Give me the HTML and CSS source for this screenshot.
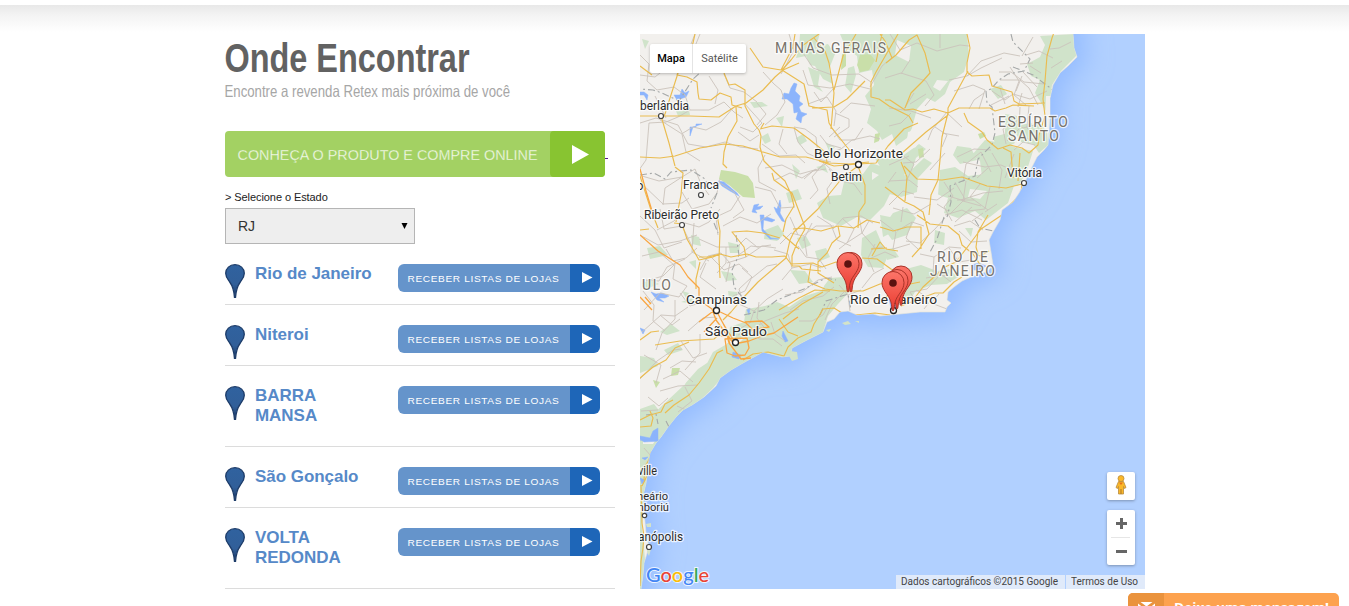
FILE: index.html
```html
<!DOCTYPE html>
<html lang="pt-BR">
<head>
<meta charset="utf-8">
<title>Onde Encontrar</title>
<link rel="stylesheet" href="styles.css">
</head>
<body>
<svg class="defs" width="0" height="0">
  <defs>
    <linearGradient id="pinBlue" x1="0" y1="0" x2="0" y2="1"><stop offset="0" stop-color="#30629f"/><stop offset=".6" stop-color="#315f99"/><stop offset="1" stop-color="#183663"/></linearGradient>
    <linearGradient id="pinRed" x1="0" y1="0" x2="0" y2="1"><stop offset="0" stop-color="#fc7569"/><stop offset="1" stop-color="#e93b30"/></linearGradient>
    <symbol id="pin" viewBox="0 0 20 34"><path d="M10 .7C4.700.7.7 4.300.7 9.300c0 4 2 6 4 8.700C8 22.500 9 26 9.500 33.500h1C11 26 12 22.500 15.300 18c2-2.700 4-4.700 4-8.700C19.300 4.300 15.300.7 10 .7z" fill="url(#pinBlue)" stroke="#1d3c69" stroke-width="1.300"/></symbol>
    <symbol id="receber" viewBox="0 0 202 28">
      <path d="M6 0H172V28H6a6 6 0 0 1-6-6V6a6 6 0 0 1 6-6z" fill="#6594cb"/><path d="M172 0h24a6 6 0 0 1 6 6v16a6 6 0 0 1-6 6h-24z" fill="#1e66b8"/><path d="M184 8l10.500 5.500L184 19z" fill="#fff"/>
    </symbol>
    <g id="marker"><path d="M0 0C-.7-.2-1-1-1.200-4-2-12-5-15-8-19.500-9.500-22-11-24.500-11-28.500A11 11 0 0 1 11-28.500C11-24.500 9.500-22 8-19.500 5-15 2-12 1.200-4 1-1 .7-.2 0 0z" fill="url(#pinRed)" stroke="#a83228" stroke-width="1"/><circle cy="-28" r="3.800" fill="#5c1210"/></g>
  </defs>
</svg>
<div class="topbar"></div>
<main class="page">
  <section class="stores">
    <h1 class="title"><svg width="390" height="44"><text x="-.5" y="37.500" textLength="245" lengthAdjust="spacingAndGlyphs">Onde Encontrar</text></svg></h1>
    <p class="subtitle"><svg width="390" height="26"><text x="-.5" y="19" textLength="285.500" lengthAdjust="spacingAndGlyphs">Encontre a revenda Retex mais próxima de você</text></svg></p>
    <a class="buy"><svg width="384" height="46">
      <rect width="380" height="46" rx="4" fill="#a3d163"/><rect x="325" width="55" height="46" rx="4" fill="#88c431"/><path d="M347 14l17 9.500-17 9.500z" fill="#fff"/><path d="M380 27.500h3" stroke="#551a8b"/>
      <text x="12.500" y="29" textLength="300" lengthAdjust="spacingAndGlyphs">CONHEÇA O PRODUTO E COMPRE ONLINE</text></svg></a>
    <label class="state-label">&gt; Selecione o Estado</label>
    <div class="select"><span>RJ</span><svg width="7" height="7"><path d="M.5 0h6L3.500 6z"/></svg></div>
    <ul class="list">
      <li><svg class="pin"><use href="#pin"/></svg><strong>Rio de Janeiro</strong><svg class="receber"><use href="#receber"/><text x="9.500" y="18" textLength="152" lengthAdjust="spacingAndGlyphs">RECEBER LISTAS DE LOJAS</text></svg></li>
      <li><svg class="pin"><use href="#pin"/></svg><strong>Niteroi</strong><svg class="receber"><use href="#receber"/><text x="9.500" y="18" textLength="152" lengthAdjust="spacingAndGlyphs">RECEBER LISTAS DE LOJAS</text></svg></li>
      <li><svg class="pin"><use href="#pin"/></svg><strong>BARRA MANSA</strong><svg class="receber"><use href="#receber"/><text x="9.500" y="18" textLength="152" lengthAdjust="spacingAndGlyphs">RECEBER LISTAS DE LOJAS</text></svg></li>
      <li><svg class="pin"><use href="#pin"/></svg><strong>São Gonçalo</strong><svg class="receber"><use href="#receber"/><text x="9.500" y="18" textLength="152" lengthAdjust="spacingAndGlyphs">RECEBER LISTAS DE LOJAS</text></svg></li>
      <li><svg class="pin"><use href="#pin"/></svg><strong>VOLTA REDONDA</strong><svg class="receber"><use href="#receber"/><text x="9.500" y="18" textLength="152" lengthAdjust="spacingAndGlyphs">RECEBER LISTAS DE LOJAS</text></svg></li>
    </ul>
  </section>
  <section class="map">
    <svg class="canvas" width="505" height="555" viewBox="640 34 505 555">
      <defs>
        <filter id="soft" x="-30%" y="-30%" width="160%" height="160%"><feGaussianBlur stdDeviation="13"/></filter>
        <path id="coast" d="M600 0H1073V34L1074 48 1077 57 1068 66 1060 73 1053 85 1050 98 1050 115 1049 130 1048 145 1044 150 1037 157 1031 169 1025 182 1019 193 1013 202 1002 210 1000 220 993 232 989 240 991 252 993 265 988 271 980 274 971 277 962 281 954 287 948 292 947 300 951 303 947 307 945 312 920 312 900 314 880 316 873 314 857 315 848 311 840 312 834 319 827 322 823 332 807 340 792 348 790 356 782 357 763 352 743 363 731 370 720 378 716 386 704 397 692 405 683 410 676 417 668 427 661 437 656 443 650 453 648 463 647 475 646 483 643 496 644 510 645 522 646 533 649 547 644 563 643 575 641 589 639 600H600z"/>
        <clipPath id="land"><use href="#coast"/></clipPath>
      </defs>
      <rect x="640" y="34" width="505" height="555" fill="#b1d0ff"/>
      <use href="#coast" fill="#92bbff" stroke="#94bcff" stroke-width="20" filter="url(#soft)"/>
      <use href="#coast" fill="#f2f0ed" stroke="#e7e6d8" stroke-width=".6"/>
      <path d="M790 351l7 1 1 7-6 2-3-5zM842 323l6-2 3 3-6 1zM855 321l4 0 0 2zM826 330l5-1-2 3zM648 544l3 5-2 7-2-4zM646 524l5-1 0 4-4 0z" fill="#d3e3c9"/>
      <g clip-path="url(#land)">
        <g fill="#d0e3ca">
          <path d="M800 34l20-1-4 14 12-3 7 10-6 15 4 15-10-5-8-13-5-1-4-9-10 2 3-10zM808 67l12 5-2 13 5 7-9-5zM848 68l6-2 2 9-5 18-6-7zM840 34h127l2 21-5 17-14 10-5 12-10 8-8-4-10 11-5 19-5 10-11 8-4-12-10 6-5-9-10-8 4-14-6-13 9-11-2-15-13 3-2-17-11-8zM1040 36l35-2 1 22-15 15-9 14-4 30-8-14-5-8 5-13-9-4-4-12 13-7 5-12zM1005 114l12 2 2 12-8 14-6-6zM1020 125l18-3 9 9 1 14-9 8-6-9-12-2-6-10zM990 89l11-4 6 9-9 5zM993 137l15-4 7 10-10 5-9-1z"/>
          <path d="M850 172l13 2 8-11 12 4 9-8 10 3 3 12-11 12-10 20-14 14-13-3-16 9-18-8-6-15 11-7 13-1 3-13zM872 154l11 5 18-2 18-13 7 5-10 9-5 15-13 2-15-4zM880 179l26-4 18-17 8 5-14 15-1 14-16 5-15-4zM940 170l15-3 13 9 18-2 12 7 17 2-7 20-22 17-11-9-17 7-14-5 4-15-10-3zM985 140l16 3 17 5 15 3-7 22-8 13-23 1-13-10-2-16-8-6zM957 146l14 2 6 12-17 4-7-9zM893 213l14-5 9 10-9 17-15 5-9-13zM851 186l17 2 5 15-13 14-13-5z"/>
          <path d="M746 309l19-3 12-4 12 5 16-11 16-5 8-12 9 0 12 12-12 13-10 12-5 16-12 9-16 9-5 11-30-8-18 9-8 9-19 5-12-5 10-19 14-8 3-17 14-5zM698 369l18-12 16-9 19 8 15-6-22 14-22 13-9 11-20 19-14 10-10 13-9 14-6 14-7 25-4 30-1 15 3 31-4 40-6-1V442l8-18 7-7 16-15 17-16zM640 409l14-5 10 13-10 18-14 9zM830 278l14-1 9 11-11 10-19-1 1-11zM862 238l14-8 6 14 6 11-5 13-15-1-7-12zM906 269l15-4 16 6 13-2 8 8-11 7-16 1-16 7-8 13-13-1zM765 230l13-5 6 9-7 7-13-2zM797 238l9-2 5 9-9 4zM790 270l15 1 8 11-14 2zM815 251l11-3 4 9-12 5z"/>
          <path d="M642 39l7 2-4 8zM750 102l12 0 6 4-14 2zM676 111l13-1 1 5-12 1zM776 118l8-2-2 11zM761 137l7-4 3 8-6 3zM647 248l13-2 8 9-18 4zM642 283l9-3 8 4-13 5zM660 332l11-8 9 7-13 4zM664 350l14-7 5 7-15 5zM681 302l12-4 2 6zM691 235l8 2 2 9-9-2zM689 262l7-2 0 9zM721 271l11 2 5 7-11 1zM728 242l12 3-1 8-9 0zM825 142l10 5-5 6zM816 167l9-2 3 8zM786 193l12-4 4 10-13 4zM792 164l8 7-4 8zM796 138l7-4 4 7-7 4zM880 215l10 2 5 14-12 6zM935 230l10 3-1 12-10-2zM883 250l10-2 6 9-12 3zM965 228l8 0-2 9zM640 356l14 2 4 8-18 7zM682 291l7 2-3 5zM728 291l9 1 0 6-8 1z"/>
        </g>
        <g fill="#f2f0ed"><path d="M950 94l20-6 18 6 4 20-14 9-21 1-5-10zM897 40l14 6-2 16-14-7zM926 118l17-6 5 14-14 6zM908 132l16-4-8 19-10 4zM958 127l14 0 7 10-12 9-10-6zM937 80l11 1-8 10-7-4zM872 172l7 3-7 5zM898 196l12 4-5 6zM930 190l11 6-4 9zM970 189l17 2-7 8-12-2zM725 342l20-5-9 9zM674 380l16-6-6 12zM1033 112l8 3 0 8-9 2zM1046 96l5 0-2 34-4-10zM643 441l12 0-2 3-10 0z"/></g>
        <g fill="#c9dfa9"><path d="M721 170l14 2 13 4 5 7 2 15-12-1-14-12-10-6zM860 55l10-1 5 6-6 10-9 2-3-7zM875 134l5-1-1 8-5 2zM918 149l5-1 1 9-5 1zM978 134l6-2 2 4-6 3zM672 368l8 0-2 7-7 1zM653 380l7 2-4 6zM842 54l4-3 0 15-5 4z"/></g>
        <g fill="#8cb4fc" stroke="#8cb4fc" stroke-width=".5" stroke-linejoin="round">
          <path d="M791 88l3-5 3 1-2 7 5 5-1 5 4 3-4 3 2 5 6 2-5 3-1 6-5-4 2-7-4 1-1-9-6-5-5 0 2-6 5 1zM674 95l6 0 2-6 3 4 4-2-3 6-9 3zM640 92l4 0 4 3-1 5-3-5-4 0zM690 127l6 0 0-3 6 0-9 3-3 9 0-3zM754 205l5-1-2 3 6-1-3 3-5 1 2 3-5-1zM774 207l3 2 3-9 1 6-1 7 5 9-3-1-6-9zM760 219l7-2 8 3-3 2zM718 181l6 1 13 11 2 3-9-5-8-5zM651 292l5 2 6-1 7 3-4 2-6 0 5 4-7-2zM783 331l5 10-3 1-3-6zM760 215l4 0-1 14 8 9 8 1-9 0-8-8zM640 328l5 2-2 4zM733 352l8 3-2 4-7-2zM971 265l8-2 7 3-6 4-6 0zM889 299l6-4 3 8-3 7-4-2zM747 310l3-2-1 7zM640 436l10 2 3-7 5-3 0 12 7 0-6 1-15 1-4-3zM642 458l6-1-3 3zM640 478l5 2-3 4zM640 440l14 0-1-7 5 8z"/>
        </g>
        <g class="street">
          <path d="M640 55l9 9-2 17 10 9 17-3 11 8 5 15-12 7-12 5-17 1-3 37-7 10-6 15M640 75l15 2 15-12 13 0 6-16 6-15M655 96l7 14 4 8M690 110l19 0 15-8 10 10 9 6M640 123l16-5 22 7 10 19 18 3 19-5 15 5 18 2M660 120l22 14 4 18 14 9M683 133l10-6 13 3 15-8 12-14M724 74l6 14 14 4 13 10M700 34l-9 22M709 76l9 14-3 14M744 103l18 20-9 9-13-5M757 103l9 11-9 11M738 132l12 9 9-6M763 72l11 12 7 6 4 12-8 13-12 10M789 34l5 16-9 17-4 7M794 128l4 14 9 11 15 7 9 2M783 129l-4 15 8 10M794 127l11 2 11 8 2 18M762 144l17 12 17-1 9 8M765 155l-7 13 1 14 17 9M765 168l17-3 18 9 18-5 10-7M775 180l15-7 12 5 14-9M803 53l10 15 19 7 27-1 12 8M803 70l5 15 22 3 20-4 20 5M834 88l-13 14-7-10M808 104l19-7 9 14-2 15M835 113l14 6 0 8-15 10M831 127l9 13 15 0 8-12M820 135l7 9 14 4M840 113l11-10 24 3M840 127l-11 10M825 162l-13 15 6 13-8 9M822 155l19-6 11-9 18-4 10 3M826 169l-13 2-9 8M825 164l12 11-10 14 3 15M829 169l8 11 17 4 8 11"/>
          <path d="M642 176l17 5 23-4 13-8 6 15 8 11M642 184l21 20 19-1 7-5M682 177l-17 11-2 17M682 192l10 17 17-5 8-11 3-14M660 209l4 20 18-3 10 20M640 216l15 14 9 18 18-6M657 230l17-9 9-9M720 209l-11 13-10 5-14-4M694 223l-2 29 17 9M720 183l14 9 10 18-11 8M755 187l16 4 9 17 15-1M740 196l-9 14-15 7 2 18M723 226l17-9 17 6 14-9M699 239l18 8 20 0 9-9 11 9 14-2M640 235l18 10 22-4 17-6M642 256l17-4 15 13-11 11-17 5M666 249l7 12 13-3 11-10M675 263l-2 16 14 7M646 280l13 1 8-14 18-8M644 310l16-17 19 4 8-11M643 291l11 14-1 16 12 10M642 332l19-17 14 1 13-9M675 300l0 19-13 14-6 17M680 293l10 13 13-4M660 315l12 10 8-6M688 331l15-13 13-1M700 334l0 19-15 17M681 341l12 17 14-5M670 368l12-7 14 1M640 379l17-18 16-11 9-1M644 355l17 10-5 18M663 379l17-8 13 11M660 391l18-5 20-1M685 387l7 14-14 11M677 406l9 4M641 411l17-1M648 397l11 9 9-8M644 448l7 8-4 6M642 467l6 7"/>
          <path d="M700 270l8-14 13-3 9 10-4 19M710 256l14 14 15-6 9 8M726 247l0 16-9 10M727 263l19-6 16-11 14 2M706 263l-6 14 16 12M740 254l11-8 8 1M742 268l10 9-13 12 5 16M752 278l15-12 10-2M733 296l12-5 7-14M739 304l15 7 13-12 16-10M754 311l-4 12-11 6M759 302l-2 16 9 12M738 335l15-6 12-8 20-8 14-4M750 330l9 9 14 0 9 7M771 322l4 12 10 7M790 310l13-9 20-5 11-9M799 321l13 0 11-6 9-16M785 295l17-3 16-12 14-3M782 280l10-12 18-4 11 4M792 268l-4-14-14-4M798 246l8 11 13 2 7 10M780 244l11-11 12 3 13-10 18 0M804 236l3 20M790 217l8 18M812 223l-9 18M817 216l14 9 6 15 14 6M833 229l10-11 18-2 12 7M843 219l11 10-7 14M859 216l3 17-14 9-9 7M869 221l-7 12 13 15 8-1M839 285l9 10 13-5M845 291l-13 13-7 16M848 295l2 16M862 288l11-14 11-6M875 244l-7 14 6 14M869 259l16-7 11 5M880 220l16 12-3 17 17-5M897 231l15-9 12 4M912 222l-6 16 12 11M906 241l14 2 15-14 10-11M920 254l14 3 15-10 12 1M934 257l-1 17 16 2M949 248l10 14 12-2M959 231l12 11 16-1M954 226l16-5 13 9M926 278l16-3 9 7M939 276l-12 13-17 3 8 13M916 290l15 10-7 9M939 294l-8 9 16 6"/>
          <path d="M890 34l10 16 17-7 20 8 23-6 9 1M894 56l-12 10-12 21M885 78l16-5 25 8 8 14-9 11M901 74l9-14M910 104l16-10M949 80l18-4 14-15 23-8 16 3M967 76l14-8 21-10M940 48l0-14M889 108l22 3 20 7M904 109l10-16M911 113l-10 10-12 3M947 112l-15 18-4 10M947 113l15 14M935 127l12 8-5 12M942 133l17 3M954 91l19-6 12 5-6 19M984 93l-10 7-5 9M992 91l13 9 8-6 17 5 17-8M999 72l12 0 13 10 20 2M1000 80l20 0 9 8 9 17M1010 67l9 14-5 14 12 10M1022 76l-6 15M1005 104l-5-16M991 105l18-9M1018 107l4-14M1037 87l-14-15M1020 64l13-1M1022 56l11-19M1053 58l-14-7-13 4M1041 73l-11-7M1050 49l9-1 12-6M1051 68l11-7M1018 120l-15 9 3 15M1020 107l-1 22-12 12M1007 118l16 10 15-4M1029 106l-2 22 10 10M1020 134l12 7M1014 150l9-8 12 3M957 157l17-8 17 1M981 152l-15 12-3 18M963 162l22 5 16-2 13 6M981 152l10 20M992 153l10 17-3 19M1014 154l-9 24M988 168l-11 10M945 153l-15 17M930 149l-14 13-13 1M901 154l13 10-7 16M889 165l20-9M889 181l20-1 9 7M896 172l-8 11M889 205l14-14 11 3M893 208l21 6 17-10M903 207l-2 15M914 197l23 3 17-12M944 182l9 14-9 11 8 14M955 182l10 17-15 15M966 181l-3 20 18 5M980 184l-10 13 18 13M990 187l-5 22-17 2M1003 191l-20 2-22 7M972 207l-17 15M945 215l17-5 20 10M957 200l17 0M948 196l17 5M937 204l11 7M985 212l12-8M972 221l11-8"/>
        </g>
        <g fill="none" stroke="#a5a8a8" stroke-width="1.100" stroke-dasharray="7 3 2 3"><path d="M710 64l-17 15-14 22-17-8-9-3-13-1M640 175l14-2 11 6 6-7 20-2 14 9 4 10M717 193l-6 15M714 223l4 10M736 235l3 20-7 15 2 17 8 10M744 315l20-5 13-10 10-4 17-7 22-11 10 2M1011 34l2 8 17 17-6 12-16 3-9 6-8 9-5 2 1 12 5 4 3 26-3 12-14 14-3 17-25 10 1 16-4 15M1013 67l20 8 20 15M944 217l-7 22-8 15M975 220l5 8 13 3M646 415l10-1 2 10M666 421l6 12M820 315l6-14 22-7 3 16"/></g>
        <g class="road">
          <path d="M640 66l12 9M695 34l-5 22-11 14-9 28-5 16-3 5M679 70l-2 5 10 2 10 5 1 11 1 6 12 1 9-7 11 4 1 8 10 3M724 73l5 12 6-1 10 6 0 16 9 18 5 6 2 6-1 11 4 14 11 11 10 9 6 13 3 12-8 13-3 13M640 116l20 0 30 0 29 1 17-11 10-3 17-13 12-13 8-7 16-7M750 48l13 19 18 3M819 34l-17 12-11 14-9 10 22 14 5 22 18 4 2 13 3 5 18 23M781 70l12-23 2-13M814 38l11 13 4 12 5 30-3 36M856 34l-13 22-9 34M882 34l-6 28M898 34l-22 38-5 10 0 15 8 2 10 7 20 10 4 7M865 81l-18 18-13 8-22 1M661 116l8 27 6 23M736 107l1 14-9 16-4 15-1 12 4 4M640 157l20 1 15-2 25-8 24-4 19 2 20 6 17 5 26 0 23 6 20 1 20-2M760 129l12-3 22 2 15 11 16 13 2 10M761 128l3-5M675 167l8 6-2 22-4 20-1 7M858 164l18-1 12-17 16-17 14-6M858 164l-24 2-15-5M858 166l7 19 0 18-6 9-1 16M858 166l-15 11-13 16-12 16-24 23-4 8-4 18-28 24-15 16-12 14-8 8M772 173l2 7 18 13 13 34-1 3M892 58l-7-17-5-7M886 63l10-8 13-15 8-5 8 18 5 20-8 9-11 11-6 15M967 34l3 14-3 15 0 9 5 4 17-1 3 11 20 6 2 9 5 3 26-1M968 71l-20 37 0 7-22 17-24 21M948 113l-14-4-12 3-9-3-8 1-15-10-5 0M948 113l-6 24-2 23-2 20-7 15-2 20M964 113l4 9 14 10 5 8 11 9 12-4 12 3 7 5 9-8 1-10 6-19-2-17 2-18 2-25 5-18 5-14M948 113l11-5 31 0 5 3 11-3 7-3 21 1M904 166l13 13 25 1 20-3 25 9 19 2 16-4-1 10-12 12-7 9-21 14-12 16-13 17-11 5-22 20-12 16M885 187l20 15 9 4 9 6 6 22-9 14-8 9M901 162l6 15-2 24M1020 153l-2 28M1003 148l8 4 2 26M880 227l13 4 14-4 14 0 0 22M917 215l13 9 18 2 11 9 3 10 11 9 8 12M968 250l12 6 9-5M988 215l-10 17-2 15 2 7M898 251l-12-2-6-7-8 14M871 249l16-1"/>
          <path d="M640 176l11 34 7 18M674 223l8 1 5 15 12 21 14-3 7-3 11 3 16-3 9 3 16 0 13-1 6 8 22-1 9 4 14-5 11 2M746 257l-2-10-12-15 15-1 16 2 17 5M640 230l9-1M700 262l-4 17 0 10M717 215l3 16-1 28 1 19M699 257l9 0 12-3M805 229l-8 14-5 13 0 10 7 0 3 3 19 2M793 229l11-1 17 3 17-5 2 10-8 7-5 10-9 9 0 11 16 10M811 264l-3 18 17 7 15 2 23 0 17-7 18-3M862 258l15 1 14 10 7 3M838 226l16 2 13-8 13 3M783 235l16 14M779 310l20-12 16-8 15 1M783 319l19-15 21-12M779 319l9 13 10 4M640 340l11-8 8-1M655 345l25-4 34-2 9-8M640 378l13-11 13-7 9-12 14-6M723 350l-6 3-8 16-10 14-10 12-15 10-9 8M743 360l10-6 15-2 16 4 4-9 10-9 13-6 3-8 5-8 4-7 11-1 8 5 14 2 19-2 15 2M881 303l7-8 12-9 20-4M901 306l18-7 16-6 8 0 11-11 8-5M650 411l3 7-2 8-11 1M640 420l10-5 11-3 4-8 8-4M651 452l-2 8-4 6-1 14M647 476l-5 10M641 485l1 38 2 13-1 12-2 13-1 25"/>
        </g>
        <g class="highway"><path d="M640 169l6 22 6 20M640 235l18 16 22 14 8 12 11 11 0 12 13 9 4 11 11 15 3 9M640 297l12 13M645 297l6 7M716 310l17 8 13 5 9 9M699 322l17-13M704 332l13-14M717 336l11 0 6 8 15-3 13-5 12-3 12-8 12-8M716 310l10 19 3 14 12 16 10-1M725 339l22-1 2 10-4 7-10 1-8-3zM745 322l17-1 7 6-19 3M735 342l-8-12-7-12"/></g>
      </g>
      <g class="labels">
        <g class="region"><text x="775" y="53" textLength="111">MINAS GERAIS</text><text x="998" y="127" textLength="70">ESPÍRITO</text><text x="1008" y="141" textLength="51">SANTO</text><text x="937" y="262" textLength="51">RIO DE</text><text x="930" y="276" textLength="65">JANEIRO</text><text x="642" y="290" textLength="29">ULO</text></g>
        <g class="city big"><text x="814" y="158" textLength="89" lengthAdjust="spacingAndGlyphs">Belo Horizonte</text><text x="686" y="304" textLength="61" lengthAdjust="spacingAndGlyphs">Campinas</text><text x="705" y="336" textLength="62" lengthAdjust="spacingAndGlyphs">São Paulo</text><text x="850" y="304" textLength="87" lengthAdjust="spacingAndGlyphs">Rio de Janeiro</text></g>
        <g class="city"><text x="640" y="110" textLength="49" lengthAdjust="spacingAndGlyphs">berlândia</text><text x="831" y="181" textLength="31" lengthAdjust="spacingAndGlyphs">Betim</text><text x="683" y="189" textLength="36" lengthAdjust="spacingAndGlyphs">Franca</text><text x="644" y="219" textLength="75" lengthAdjust="spacingAndGlyphs">Ribeirão Preto</text><text x="1007" y="177" textLength="35" lengthAdjust="spacingAndGlyphs">Vitória</text><text x="638" y="475" textLength="19" lengthAdjust="spacingAndGlyphs">ville</text><text x="638" y="541" textLength="45" lengthAdjust="spacingAndGlyphs">anópolis</text><text x="636.500" y="190">o</text></g>
        <g class="city small"><text x="637" y="500" textLength="31" lengthAdjust="spacingAndGlyphs">neário</text><text x="634" y="511" textLength="35" lengthAdjust="spacingAndGlyphs">mboriú</text></g>
      </g>
      <g fill="#fff" stroke="#444" stroke-width="1.200"><circle cx="661" cy="116" r="2.500"/><circle cx="846" cy="167" r="2.500"/><circle cx="701" cy="195" r="2.500"/><circle cx="682" cy="225" r="2.500"/><circle cx="1024" cy="183" r="2.500"/><circle cx="644.500" cy="515.500" r="2.200"/><circle cx="649" cy="547" r="2.500"/><g stroke="#222" stroke-width="1.300"><circle cx="858.500" cy="164.500" r="3"/><circle cx="716.500" cy="310.500" r="3"/><circle cx="735.500" cy="342.500" r="3"/><circle cx="893.500" cy="310.500" r="3"/></g></g>
      <use href="#marker" x="851" y="292"/><use href="#marker" x="848" y="292"/>
      <use href="#marker" x="901" y="305.500"/><use href="#marker" x="897" y="309"/><use href="#marker" x="893" y="311"/>
      <text class="google" x="646" y="582" textLength="63" lengthAdjust="spacingAndGlyphs"><tspan fill="#4285f4">G</tspan><tspan fill="#ea4335">o</tspan><tspan fill="#fbbc05">o</tspan><tspan fill="#4285f4">g</tspan><tspan fill="#34a853">l</tspan><tspan fill="#ea4335">e</tspan></text>
    </svg>
    <div class="types"><span class="on">Mapa</span><span>Satélite</span></div>
    <div class="controls">
      <div class="pegman"><svg width="28" height="28"><path d="M11.500 9.500h5l2.500 6-1.500 1-1-2V22h-5v-7.500l-1 2-1.500-1z" fill="#fbb829" stroke="#b88a3d" stroke-width=".8"/><circle cx="14" cy="6.500" r="3" fill="#fbb829" stroke="#b88a3d" stroke-width=".8"/><path d="M12 10.500h4l-2 2.500z" fill="#e6711b"/><path d="M14 17v5" stroke="#a8762c"/></svg></div>
      <div class="zoom"><svg width="28" height="55"><path d="M9 13.500h11M14.500 8v11M9 41.500h11" stroke="#666" stroke-width="3"/><path d="M4 27.500h19" stroke="#e6e6e6"/></svg></div>
    </div>
    <div class="credits"><span><svg width="158" height="14"><text x="0" y="10" textLength="157" lengthAdjust="spacingAndGlyphs">Dados cartográficos ©2015 Google</text></svg></span><span><svg width="68" height="14"><text x="0" y="10" textLength="67" lengthAdjust="spacingAndGlyphs">Termos de Uso</text></svg></span></div>
  </section>
</main>
<aside class="chat"><div class="chat-icon"><svg width="18" height="14"><path d="M2.500 1h12L8.500 5.500z" fill="#fff"/><path d="M0 2.500L7 8 0 14zM17 2.500L10 8l7 6z" fill="#fff"/></svg></div><svg width="170" height="30"><text x="10" y="19" textLength="155" lengthAdjust="spacingAndGlyphs">Deixe uma mensagem!</text></svg></aside>
</body>
</html>
```
FILE: styles.css
```css
* { box-sizing: border-box; }
body { margin: 0; height: 606px; overflow: hidden; background: #fff; font-family: "Liberation Sans", Arial, sans-serif; }
svg { display: block; }
.defs { position: absolute; }
.topbar { height: 34px; background: linear-gradient(#fff 0 5px, #e8e8e8 5px, #f3f3f3 15px, #fff 32px); }
.page { display: flex; gap: 25px; padding-left: 225px; }
.stores { width: 390px; flex: none; }
.title, .subtitle { margin: 0; }
.title svg, .subtitle svg { overflow: visible; }
.title text { font: bold 40.5px "Liberation Sans", Arial, sans-serif; fill: #626262; }
.subtitle text { font: 16.5px "Liberation Sans", Arial, sans-serif; fill: #a6a6a6; }
.buy { display: block; margin-top: 27px; }
.buy text { font: 300 15.5px "Liberation Sans", Arial, sans-serif; fill: #f8fcf2; stroke: #a3d163; stroke-width: .3px; }
.state-label { display: block; height: 31px; padding-top: 13px; font-size: 11px; line-height: 14px; letter-spacing: -.08px; color: #222; }
.select { display: flex; width: 190px; height: 36px; align-items: center; justify-content: space-between; padding: 0 6px 0 12px; border: 1px solid #b5b5b5; background: #eee; font-size: 14px; color: #333; }
.list { margin: 0; padding: 0; list-style: none; }
.list li { display: grid; grid-template-columns: 30px 120px 1fr; padding-top: 20px; border-bottom: 1px solid #dcdcdc; align-items: start; }
.pin { width: 20px; height: 34px; }
.list strong { padding-bottom: 20px; font-size: 17px; line-height: 20px; letter-spacing: -.04px; color: #5689c8; }
.receber { width: 202px; height: 28px; margin: 0 0 12px 23px; }
.receber text { font: 9.5px "Liberation Sans", Arial, sans-serif; letter-spacing: .6px; fill: #fff; }
.map { position: relative; width: 505px; height: 555px; flex: none; overflow: hidden; font-family: Roboto, sans-serif; }
.street { fill: none; stroke: #cbc3bb; stroke-width: .9px; stroke-linejoin: round; }
.road, .highway { fill: none; stroke: #eabc50; stroke-width: 1.15px; stroke-linejoin: round; }
.highway { stroke: #f9a642; stroke-width: 1.3px; }
.labels text { stroke: #fff; stroke-opacity: .75; stroke-width: 2.5px; stroke-linejoin: round; paint-order: stroke; }
.region { font: 14px Roboto, sans-serif; fill: #77726b; }
.city { font: 12px Roboto, sans-serif; fill: #2b2b2b; }
.big { font-size: 13.5px; }
.small { font-size: 11px; }
.google { font: 20px Lato, sans-serif; font-weight: 500; stroke: #fff; stroke-opacity: .8; stroke-width: 2px; paint-order: stroke; }
.types { position: absolute; left: 10px; top: 10px; display: flex; height: 29px; background: #fff; border-radius: 2px; box-shadow: 0 1px 3px rgba(0,0,0,.25); font-size: 11px; line-height: 29px; color: #565656; }
.types span { width: 53px; text-align: center; }
.types .on { width: 43px; border-right: 1px solid #e4e4e4; font-weight: 500; color: #000; }
.controls { position: absolute; right: 10px; top: 438px; display: grid; gap: 10px; }
.pegman, .zoom { width: 28px; background: #fff; border-radius: 2px; box-shadow: 0 1px 3px rgba(0,0,0,.3); }
.credits { position: absolute; right: 0; bottom: 0; display: flex; gap: 1px; height: 14px; }
.credits span { padding: 0 0 0 5px; background: #e0eafa; }
.credits span:first-child { width: 169px; }
.credits span:last-child { width: 79px; }
.credits text { font: 10px Roboto, sans-serif; fill: #444; }
.chat { position: fixed; left: 1128px; top: 593px; display: flex; width: 211px; height: 30px; overflow: hidden; border-radius: 5px; background: #fda24e; }
.chat-icon { width: 36px; padding: 8px 0 0 10px; background: #ea933d; }
.chat text { font: bold 13px "Open Sans", sans-serif; fill: #fff; }
```
